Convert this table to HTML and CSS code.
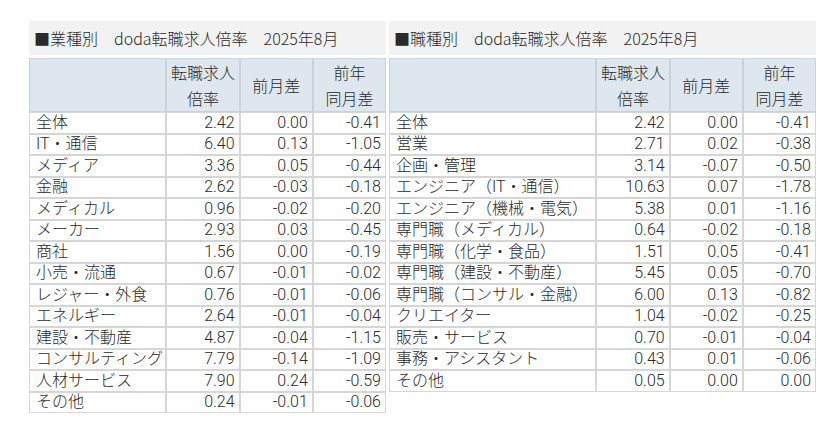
FILE: index.html
```html
<!DOCTYPE html>
<html lang="ja">
<head>
<meta charset="utf-8">
<title>doda転職求人倍率 2025年8月</title>
<link rel="stylesheet" href="styles.css">
</head>
<body>
<div class="page">
  <section class="panel panel-left">
    <div class="title">■業種別　doda転職求人倍率　2025年8月</div>
    <table class="grid">
      <colgroup><col class="c-label"><col class="c-num"><col class="c-num"><col class="c-num"></colgroup>
      <thead>
        <tr><th></th><th>転職求人<br>倍率</th><th>前月差</th><th>前年<br>同月差</th></tr>
      </thead>
      <tbody>
        <tr><td>全体</td><td>2.42</td><td>0.00</td><td>-0.41</td></tr>
        <tr><td>IT・通信</td><td>6.40</td><td>0.13</td><td>-1.05</td></tr>
        <tr><td>メディア</td><td>3.36</td><td>0.05</td><td>-0.44</td></tr>
        <tr><td>金融</td><td>2.62</td><td>-0.03</td><td>-0.18</td></tr>
        <tr><td>メディカル</td><td>0.96</td><td>-0.02</td><td>-0.20</td></tr>
        <tr><td>メーカー</td><td>2.93</td><td>0.03</td><td>-0.45</td></tr>
        <tr><td>商社</td><td>1.56</td><td>0.00</td><td>-0.19</td></tr>
        <tr><td>小売・流通</td><td>0.67</td><td>-0.01</td><td>-0.02</td></tr>
        <tr><td>レジャー・外食</td><td>0.76</td><td>-0.01</td><td>-0.06</td></tr>
        <tr><td>エネルギー</td><td>2.64</td><td>-0.01</td><td>-0.04</td></tr>
        <tr><td>建設・不動産</td><td>4.87</td><td>-0.04</td><td>-1.15</td></tr>
        <tr><td>コンサルティング</td><td>7.79</td><td>-0.14</td><td>-1.09</td></tr>
        <tr><td>人材サービス</td><td>7.90</td><td>0.24</td><td>-0.59</td></tr>
        <tr><td>その他</td><td>0.24</td><td>-0.01</td><td>-0.06</td></tr>
      </tbody>
    </table>
  </section>
  <section class="panel panel-right">
    <div class="title">■職種別　doda転職求人倍率　2025年8月</div>
    <table class="grid">
      <colgroup><col class="c-label-wide"><col class="c-num"><col class="c-num"><col class="c-num"></colgroup>
      <thead>
        <tr><th></th><th>転職求人<br>倍率</th><th>前月差</th><th>前年<br>同月差</th></tr>
      </thead>
      <tbody>
        <tr><td>全体</td><td>2.42</td><td>0.00</td><td>-0.41</td></tr>
        <tr><td>営業</td><td>2.71</td><td>0.02</td><td>-0.38</td></tr>
        <tr><td>企画・管理</td><td>3.14</td><td>-0.07</td><td>-0.50</td></tr>
        <tr><td>エンジニア（IT・通信）</td><td>10.63</td><td>0.07</td><td>-1.78</td></tr>
        <tr><td>エンジニア（機械・電気）</td><td>5.38</td><td>0.01</td><td>-1.16</td></tr>
        <tr><td>専門職（メディカル）</td><td>0.64</td><td>-0.02</td><td>-0.18</td></tr>
        <tr><td>専門職（化学・食品）</td><td>1.51</td><td>0.05</td><td>-0.41</td></tr>
        <tr><td>専門職（建設・不動産）</td><td>5.45</td><td>0.05</td><td>-0.70</td></tr>
        <tr><td>専門職（コンサル・金融）</td><td>6.00</td><td>0.13</td><td>-0.82</td></tr>
        <tr><td>クリエイター</td><td>1.04</td><td>-0.02</td><td>-0.25</td></tr>
        <tr><td>販売・サービス</td><td>0.70</td><td>-0.01</td><td>-0.04</td></tr>
        <tr><td>事務・アシスタント</td><td>0.43</td><td>0.01</td><td>-0.06</td></tr>
        <tr><td>その他</td><td>0.05</td><td>0.00</td><td>0.00</td></tr>
      </tbody>
    </table>
  </section>
</div>
</body>
</html>
```

FILE: styles.css
```css
* { box-sizing: border-box; }

html, body {
  margin: 0;
  background: #ffffff;
}

body {
  font-family: "Noto Sans CJK JP", "Noto Sans", sans-serif;
  font-size: 16px;
  font-weight: 300;
  color: #2a2a2a;
}

.page {
  display: flex;
  align-items: flex-start;
  gap: 3px;
  padding: 21px 0 0 29px;
}

.panel {
  display: flex;
  flex-direction: column;
  gap: 3px;
}

.panel-left { width: 357px; }
.panel-right { width: 427px; }

.title {
  height: 34px;
  background: #f2f2f2;
  padding: 0 0 0 5px;
  display: flex;
  align-items: center;
  line-height: 1;
  white-space: nowrap;
}

.grid {
  width: 100%;
  table-layout: fixed;
  border-collapse: separate;
  border-spacing: 0;
}

.c-label { width: 137px; }
.c-label-wide { width: 207px; }
.c-num { width: 73px; }

.grid th {
  height: 53px;
  background: #dde7ed;
  border: 1px solid #c8d2d8;
  font-weight: 300;
  line-height: 26px;
  padding: 0;
  text-align: center;
  vertical-align: middle;
}

.grid td {
  height: 21.5px;
  border: 1px solid #d6d6d6;
  padding: 0 4px 0 6px;
  font-family: Roboto, "Noto Sans CJK JP", sans-serif;
  line-height: 1;
  white-space: nowrap;
  text-align: right;
  vertical-align: middle;
}

.grid td:first-child {
  text-align: left;
}
```
